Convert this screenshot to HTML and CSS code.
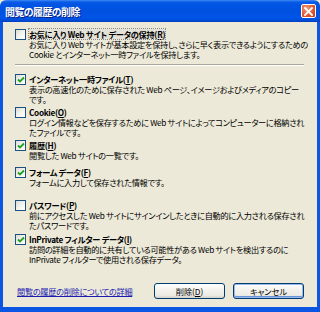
FILE: index.html
```html
<!DOCTYPE html>
<html lang="ja">
<head>
<meta charset="utf-8">
<link rel="stylesheet" href="styles.css">
</head>
<body>
<div class="window">
  <div class="titlebar">
    <span class="title">閲覧の履歴の削除</span>
    <span class="close"><svg width="9" height="9" viewBox="0 0 9 9"><path d="M1 1L8 8M8 1L1 8" stroke="#fff" stroke-width="1.8" stroke-linecap="square"/></svg></span>
  </div>
  <div class="body">
    <div class="item">
      <span class="cb"></span>
      <div class="txt">
        <div class="label focus">お気に入り Web サイト データの保持(<u>R</u>)</div>
        <div class="desc">お気に入り Web サイトが基本設定を保持し、さらに早く表示できるようにするための<br>Cookie とインターネット一時ファイルを保持します。</div>
      </div>
    </div>
    <div class="sep"></div>
    <div class="item gap-3">
      <span class="cb checked"><svg width="8" height="8" viewBox="0 0 8 8"><path d="M1 3.5L3 5.5L7 1.5" fill="none" stroke="#21a121" stroke-width="1.8"/></svg></span>
      <div class="txt">
        <div class="label">インターネット一時ファイル(<u>T</u>)</div>
        <div class="desc">表示の高速化のために保存された Web ページ、イメージおよびメディアのコピー<br>です。</div>
      </div>
    </div>
    <div class="item gap-3">
      <span class="cb"></span>
      <div class="txt">
        <div class="label">Cookie(<u>O</u>)</div>
        <div class="desc">ログイン情報などを保存するために Web サイトによってコンピューターに格納され<br>たファイルです。</div>
      </div>
    </div>
    <div class="item gap-7">
      <span class="cb checked"><svg width="8" height="8" viewBox="0 0 8 8"><path d="M1 3.5L3 5.5L7 1.5" fill="none" stroke="#21a121" stroke-width="1.8"/></svg></span>
      <div class="txt">
        <div class="label">履歴(<u>H</u>)</div>
        <div class="desc">閲覧した Web サイトの一覧です。</div>
      </div>
    </div>
    <div class="item gap-13">
      <span class="cb checked"><svg width="8" height="8" viewBox="0 0 8 8"><path d="M1 3.5L3 5.5L7 1.5" fill="none" stroke="#21a121" stroke-width="1.8"/></svg></span>
      <div class="txt">
        <div class="label">フォーム データ(<u>F</u>)</div>
        <div class="desc">フォームに入力して保存された情報です。</div>
      </div>
    </div>
    <div class="item gap-4">
      <span class="cb"></span>
      <div class="txt">
        <div class="label">パスワード(<u>P</u>)</div>
        <div class="desc">前にアクセスした Web サイトにサインインしたときに自動的に入力される保存され<br>たパスワードです。</div>
      </div>
    </div>
    <div class="item">
      <span class="cb checked"><svg width="8" height="8" viewBox="0 0 8 8"><path d="M1 3.5L3 5.5L7 1.5" fill="none" stroke="#21a121" stroke-width="1.8"/></svg></span>
      <div class="txt">
        <div class="label">InPrivate フィルター データ(<u>I</u>)</div>
        <div class="desc">訪問の詳細を自動的に共有している可能性がある Web サイトを検出するのに<br>InPrivate フィルターで使用される保存データ。</div>
      </div>
    </div>
    <div class="footer">
      <a class="link" href="#">閲覧の履歴の削除についての詳細</a>
      <div class="btns">
        <button class="btn">削除(<u>D</u>)</button>
        <button class="btn default">キャンセル</button>
      </div>
    </div>
  </div>
</div>
</body>
</html>
```

FILE: styles.css
```css
html, body {
  margin: 0;
  padding: 0;
  background: #ece9d8;
}
.window {
  width: 320px;
  height: 312px;
  display: flex;
  flex-direction: column;
  font-family: "Noto Sans CJK JP", "Liberation Sans", sans-serif;
  font-feature-settings: "palt";
  color: #000;
}
.titlebar {
  height: 22px;
  flex: none;
  display: flex;
  align-items: center;
  justify-content: space-between;
  padding: 0 4px 0 5px;
  border-radius: 6px 6px 0 0;
  background: linear-gradient(to bottom, #3d8cf5 0, #0a5ae6 2px, #0054e3 5px, #0051e0 12px, #0055e8 18px, #0047d0 21px, #003cb8 22px);
}
.title {
  color: #fff;
  font-weight: bold;
  font-size: 10px;
  letter-spacing: -0.6px;
  text-shadow: 1px 1px 0 #0a1e80;
}
.close {
  width: 13px;
  height: 12px;
  border: 1px solid #fff;
  border-radius: 2px;
  background: radial-gradient(circle at 35% 30%, #f19a7e 0, #e05a32 55%, #c63a14 100%);
  display: flex;
  align-items: center;
  justify-content: center;
}
.body {
  flex: 1;
  border: 3px solid #0b57e4;
  border-top: none;
  border-bottom-width: 5px;
  padding: 7px 13px 0 12px;
  display: flex;
  flex-direction: column;
}
.item {
  display: flex;
  align-items: flex-start;
}
.gap-3 { margin-bottom: 3px; }
.gap-4 { margin-bottom: 4px; }
.gap-7 { margin-bottom: 7px; }
.gap-13 { margin-bottom: 13px; }
.cb {
  flex: none;
  width: 9px;
  height: 9px;
  border: 1px solid #1c5180;
  background: linear-gradient(135deg, #dcdcd7 0, #f2f2ee 50%, #fff 100%);
  margin-right: 3px;
  display: flex;
  align-items: center;
  justify-content: center;
}
.txt {
  font-size: 8.2px;
  line-height: 10px;
  letter-spacing: -0.3px;
  white-space: nowrap;
}
.label {
  font-weight: bold;
  height: 10px;
}
.focus {
  display: inline-block;
  outline: 1px dotted #8a8a8a;
  background: #e4e2d8;
}
.sep {
  height: 1px;
  margin: 5px 0 8px 0;
  background: #aca899;
  border-bottom: 1px solid #fff;
}
.footer {
  margin-top: 19px;
  display: flex;
  align-items: center;
  justify-content: space-between;
}
.link {
  margin-left: 2px;
  color: #1a1ab0;
  font-size: 8.2px;
  letter-spacing: -0.3px;
  line-height: 10px;
  text-decoration: underline;
}
.btns {
  display: flex;
  gap: 8px;
}
.btn {
  width: 71px;
  height: 16px;
  padding: 0;
  border: 1px solid #003c74;
  border-radius: 3px;
  background: linear-gradient(to bottom, #fff 0, #f4f3ee 40%, #ecebe4 80%, #d6d0c5 100%);
  font-family: "Noto Sans CJK JP", "Liberation Sans", sans-serif;
  font-feature-settings: "palt";
  font-size: 8.2px;
  line-height: 12px;
  color: #000;
}
.default {
  box-shadow: inset 0 0 0 1px #98b8ea, inset 0 -1px 0 1px #6a94dc;
}
```
